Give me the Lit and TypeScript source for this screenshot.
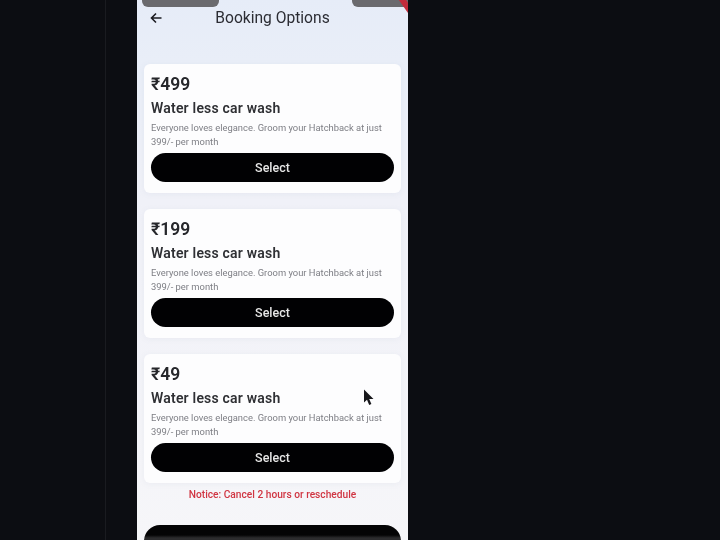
import { LitElement, html, css } from "lit";
import { customElement } from "lit/decorators.js";

const plans = ["₹499", "₹199", "₹49"];

@customElement("app-root")
export class AppRoot extends LitElement {
  static styles = css`
    :host { display: block; width: 720px; height: 540px; overflow: hidden; background: #0c0d12; font-family: Roboto, "Liberation Sans", sans-serif; }
    .desk { display: flex; height: 540px; }
    .rail { width: 105px; flex: none; border-right: 1px solid #1a1b20; }
    .gap { width: 31px; flex: none; }
    .phone { position: relative; width: 271px; height: 540px; flex: none; overflow: hidden; box-sizing: border-box; padding: 0 7px; background: linear-gradient(180deg, #e6ecf8 0, #e9eef8 60px, #f0f1f8 200px, #f6f6f9 540px); filter: blur(0.5px); }
    .pill { position: absolute; top: -10px; height: 17px; background: #6a6a6e; border-radius: 6px; }
    .pill.l { left: 5px; width: 77px; }
    .pill.r { left: 215px; width: 60px; }
    .ribbon { position: absolute; top: 2px; left: 258px; width: 22px; height: 6px; background: #c22c3c; transform: rotate(55deg); }
    .head { height: 35px; display: flex; align-items: center; justify-content: center; position: relative; font-size: 15.6px; color: #2b2c33; }
    .head svg { position: absolute; left: 6px; top: 12px; }
    .list { display: flex; flex-direction: column; gap: 16px; margin-top: 29px; }
    .card { height: 129px; box-sizing: border-box; background: #fdfdfe; border-radius: 6px; padding: 10px 7px 0; box-shadow: 0 1px 6px rgba(120,125,150,.08); }
    .price { font-size: 17.5px; font-weight: 600; line-height: 21px; color: #26272b; }
    .title { font-size: 14px; letter-spacing: .2px; font-weight: 600; line-height: 17px; margin-top: 5px; color: #2f3034; }
    .desc { font-size: 9.4px; line-height: 13.5px; margin-top: 4px; color: #7d7e84; }
    .btn { height: 29px; margin-top: 5px; border-radius: 15px; background: #010103; color: #e6e6e6; font-size: 12.5px; font-weight: 500; display: flex; align-items: center; justify-content: center; }
    .notice { text-align: center; font-size: 10.2px; font-weight: 500; line-height: 12px; margin-top: 6px; color: #d03542; }
    .cta { height: 40px; margin-top: 24px; border-radius: 16px; background: linear-gradient(180deg, #040405 0, #040405 10px, #2c2c2e 13px); }
    .cursor { position: absolute; left: 226px; top: 389px; }
  `;

  render() {
    return html`<div class="desk">
      <div class="rail"></div>
      <div class="gap"></div>
      <div class="phone">
        <div class="pill l"></div>
        <div class="pill r"></div>
        <div class="ribbon"></div>
        <div class="head">
          <svg width="12" height="12" viewBox="0 0 12 12" fill="none" stroke="#1c1c22" stroke-width="1.6"><path d="M11.5 6H1.5M6 1.5 1.5 6 6 10.5"/></svg>
          Booking Options
        </div>
        <div class="list">
          ${plans.map(
            (p) => html`<div class="card">
              <div class="price">${p}</div>
              <div class="title">Water less car wash</div>
              <div class="desc">Everyone loves elegance. Groom your Hatchback at just 399/- per month</div>
              <div class="btn">Select</div>
            </div>`
          )}
        </div>
        <div class="notice">Notice: Cancel 2 hours or reschedule</div>
        <div class="cta"></div>
        <svg class="cursor" width="11" height="17" viewBox="0 0 11 17"><path d="M1 .5v13l3-2.8 2.2 5.2 2.2-1-2.2-5h4.3z" fill="#17171b"/></svg>
      </div>
    </div>`;
  }
}
